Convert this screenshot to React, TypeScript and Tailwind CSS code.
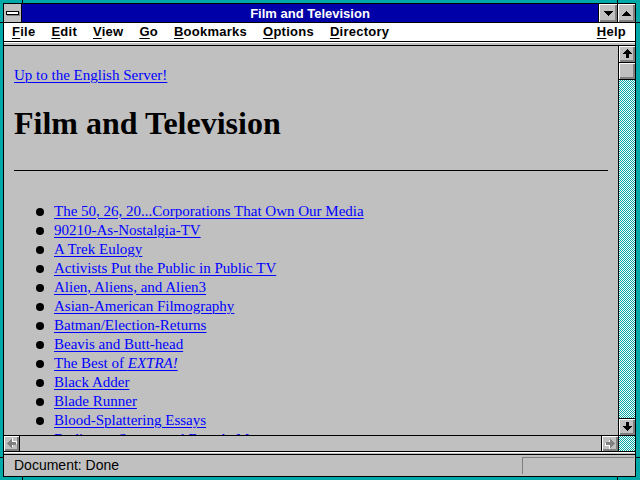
const bevel =
  "bg-[#c0c0c0] shadow-[inset_1px_1px_0_#ffffff,inset_-1px_-1px_0_#808080,inset_-2px_-2px_0_#808080]";
const dither =
  "bg-[image:repeating-conic-gradient(#00a8a8_0%_25%,#ffffff_0%_50%)] bg-[length:2px_2px]";

const items: React.ReactNode[] = [
  "The 50, 26, 20...Corporations That Own Our Media",
  "90210-As-Nostalgia-TV",
  "A Trek Eulogy",
  "Activists Put the Public in Public TV",
  "Alien, Aliens, and Alien3",
  "Asian-American Filmography",
  "Batman/Election-Returns",
  "Beavis and Butt-head",
  <>
    The Best of <i>EXTRA!</i>
  </>,
  "Black Adder",
  "Blade Runner",
  "Blood-Splattering Essays",
  "Bodies on Screen and Female Monsters",
];

function Arrow({ dir, disabled }: { dir: "up" | "down" | "left" | "right"; disabled?: boolean }) {
  const rot = { up: 0, right: 90, down: 180, left: 270 }[dir];
  const pts = "7.5,3 12,8 9,8 9,12 6,12 6,8 3,8";
  return (
    <svg width="15" height="15" viewBox="0 0 15 15" shapeRendering="crispEdges">
      <g transform={`rotate(${rot} 7.5 7.5)`}>
        {disabled ? (
          <>
            <polygon points={pts} fill="#ffffff" transform="translate(1 1)" />
            <polygon points={pts} fill="#808080" />
          </>
        ) : (
          <polygon points={pts} fill="#000000" />
        )}
      </g>
    </svg>
  );
}

function Mnemonic({ first, rest }: { first: string; rest: string }) {
  return (
    <span>
      <span className="underline underline-offset-[2px] decoration-1">{first}</span>
      {rest}
    </span>
  );
}

export default function App() {
  return (
    <div className="relative w-[640px] h-[480px] overflow-hidden bg-[#00a8a8] pl-[3px] pr-[4px] pt-[3px] pb-[3px] font-['Liberation_Sans',Arial,sans-serif]">
      <div className="flex h-full flex-col border border-black">
        {/* title bar */}
        <div className="flex h-[19px] border-b border-black">
          <div className="flex w-[18px] items-center justify-center border-r border-black bg-[#c0c0c0]">
            <div className="h-[4px] w-[13px] border border-black bg-white shadow-[1px_1px_0_#808080]" />
          </div>
          <div className="flex flex-1 items-center justify-center bg-[#0000a8] pt-px text-[13px] font-bold text-white">
            Film and Television
          </div>
          <div className={`${bevel} flex w-[19px] items-center justify-center border-l border-black`}>
            <svg width="9" height="5" viewBox="0 0 9 5" shapeRendering="crispEdges">
              <polygon points="0,0 9,0 4.5,5" fill="#000" />
            </svg>
          </div>
          <div className={`${bevel} flex w-[18px] items-center justify-center border-l border-black`}>
            <svg width="9" height="5" viewBox="0 0 9 5" shapeRendering="crispEdges">
              <polygon points="4.5,0 9,5 0,5" fill="#000" />
            </svg>
          </div>
        </div>

        {/* menu bar */}
        <div className="flex h-[19px] items-center gap-[16px] border-b border-black bg-white pl-[8px] pr-[9px] text-[13px] font-bold tracking-[0.25px] text-black">
          <Mnemonic first="F" rest="ile" />
          <Mnemonic first="E" rest="dit" />
          <Mnemonic first="V" rest="iew" />
          <Mnemonic first="G" rest="o" />
          <Mnemonic first="B" rest="ookmarks" />
          <Mnemonic first="O" rest="ptions" />
          <Mnemonic first="D" rest="irectory" />
          <span className="ml-auto">
            <Mnemonic first="H" rest="elp" />
          </span>
        </div>

        {/* collapsed toolbar strip */}
        <div className="h-[5px] border-b border-black bg-[#c0c0c0] shadow-[inset_0_1px_0_#ffffff]" />

        {/* main */}
        <div className="flex h-[405px]">
          <div className="flex flex-1 flex-col">
            <div className="h-[389px] overflow-hidden bg-[#c0c0c0] pl-[10px] pr-[10px] pt-[20px] font-['Liberation_Serif','Times_New_Roman',serif] text-[15px] leading-[19px]">
              <a className="text-[#0000ff] underline decoration-1 underline-offset-[2px]">Up to the English Server!</a>
              <h1 className="mt-[21px] text-[32px] font-bold leading-[34px] text-black">Film and Television</h1>
              <div className="mt-[30px] h-px bg-black" />
              <ul className="mt-[31px]">
                {items.map((t, i) => (
                  <li key={i} className="flex h-[19px] items-start">
                    <span className="ml-[22px] mt-[6px] h-[8px] w-[8px] shrink-0 rounded-full bg-black" />
                    <a className="ml-[10px] whitespace-nowrap text-[#0000ff] underline decoration-1 underline-offset-[2px]">
                      {t}
                    </a>
                  </li>
                ))}
              </ul>
            </div>
            {/* horizontal scrollbar */}
            <div className="flex h-[16px] border-t border-black bg-[#c0c0c0]">
              <div className={`${bevel} flex w-[16px] items-center justify-center border-r border-black`}>
                <Arrow dir="left" disabled />
              </div>
              <div className="flex-1" />
              <div className={`${bevel} flex w-[17px] items-center justify-center border-l border-black`}>
                <Arrow dir="right" disabled />
              </div>
            </div>
          </div>

          {/* vertical scrollbar */}
          <div className="flex w-[17px] flex-col border-l border-black">
            <div className={`${bevel} flex h-[17px] items-center justify-center border-b border-black`}>
              <Arrow dir="up" />
            </div>
            <div className={`${bevel} h-[17px] border-b border-black`} />
            <div className={`flex-1 ${dither}`} />
            <div className={`${bevel} flex h-[18px] items-center justify-center border-y border-black`}>
              <Arrow dir="down" />
            </div>
            <div className={`h-[15px] ${dither}`} />
          </div>
        </div>

        {/* separator */}
        <div className="h-[6px] border-y border-black bg-[#c0c0c0] shadow-[inset_0_1px_0_#ffffff]" />

        {/* status bar */}
        <div className="flex flex-1 items-center bg-[#c0c0c0] pl-[10px] pr-[1px]">
          <span className="text-[14px] text-black">Document: Done</span>
          <div className="ml-auto h-[17px] w-[112px] border-l border-t border-b-white border-r-white border-[#808080]" />
        </div>
      </div>

      {/* frame corner marks */}
      <div className="absolute left-[22px] top-0 h-[3px] w-px bg-black" />
      <div className="absolute left-[617px] top-0 h-[3px] w-px bg-black" />
      <div className="absolute bottom-0 left-[22px] h-[3px] w-px bg-black" />
      <div className="absolute bottom-0 left-[617px] h-[3px] w-px bg-black" />
      <div className="absolute left-0 top-[22px] h-px w-[3px] bg-black" />
      <div className="absolute left-0 top-[457px] h-px w-[3px] bg-black" />
      <div className="absolute right-0 top-[22px] h-px w-[4px] bg-black" />
      <div className="absolute right-0 top-[457px] h-px w-[4px] bg-black" />
    </div>
  );
}
